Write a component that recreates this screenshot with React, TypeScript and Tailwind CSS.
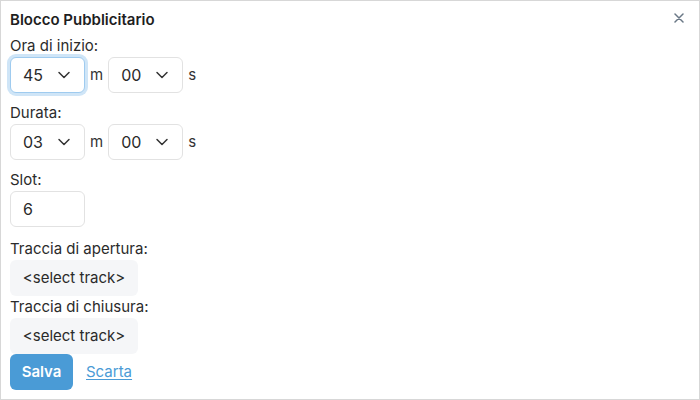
import React from "react";
import { ChevronDown } from "lucide-react";

function Sel({ value, focus }: { value: string; focus?: boolean }) {
  return (
    <div
      className={
        "flex h-[36px] w-[75px] items-center justify-between rounded-[6px] border bg-white pl-[12px] pr-[10px] text-[16px] text-[#2a2a2a] " +
        (focus
          ? "border-[#9fcbef] shadow-[0_0_0_3px_#cfe5f7]"
          : "border-[#e2e2e2]")
      }
    >
      <span>{value}</span>
      <ChevronDown size={20} strokeWidth={1.8} className="text-[#333]" />
    </div>
  );
}

function TimeRow({ m, s, focus }: { m: string; s: string; focus?: boolean }) {
  return (
    <div className="mt-px flex items-center gap-[5px]">
      <Sel value={m} focus={focus} />
      <span className="text-[15px] text-[#333]">m</span>
      <Sel value={s} />
      <span className="text-[15px] text-[#333]">s</span>
    </div>
  );
}

export default function App() {
  return (
    <div
      className="relative flex h-[400px] w-[700px] flex-col border border-[#d7d7d7] bg-white px-[9px] pt-[9px] text-[#2b2b2b]"
      style={{ fontFamily: "Inter, 'Noto Sans', sans-serif" }}
    >
      <button className="absolute right-[15px] top-[12px] flex h-[10px] w-[10px] items-center justify-center">
        <svg width="10" height="10" viewBox="0 0 10 10">
          <path d="M1 1 L9 9 M9 1 L1 9" stroke="#6a7886" strokeWidth="1.5" strokeLinecap="round" />
        </svg>
      </button>
      <div className="mb-[6px] h-[20px] text-[15px] font-semibold leading-[20px] text-[#1e1e1e]">
        Blocco Pubblicitario
      </div>

      <div className="mb-[10px]">
        <div className="h-[20px] text-[15px] leading-[20px]">Ora di inizio:</div>
        <TimeRow m="45" s="00" focus />
      </div>

      <div className="mb-[10px]">
        <div className="h-[20px] text-[15px] leading-[20px]">Durata:</div>
        <TimeRow m="03" s="00" />
      </div>

      <div className="mb-[12px]">
        <div className="h-[20px] text-[15px] leading-[20px]">Slot:</div>
        <div className="mt-px flex h-[36px] w-[75px] items-center rounded-[6px] border border-[#e2e2e2] bg-white pl-[12px] text-[16px] text-[#2a2a2a]">
          6
        </div>
      </div>

      <div className="h-[20px] text-[15px] leading-[20px]">Traccia di apertura:</div>
      <div className="mt-px flex h-[36px] w-[128px] items-center justify-center rounded-[6px] bg-[#f5f6f8] text-[15px] text-[#2a2a2a]">
        &lt;select track&gt;
      </div>
      <div className="mt-px h-[20px] text-[15px] leading-[20px]">Traccia di chiusura:</div>
      <div className="mt-px flex h-[36px] w-[128px] items-center justify-center rounded-[6px] bg-[#f5f6f8] text-[15px] text-[#2a2a2a]">
        &lt;select track&gt;
      </div>

      <div className="flex items-center gap-[13px]">
        <button className="flex h-[36px] w-[63px] items-center justify-center rounded-[6px] bg-[#4a9bd6] text-[15px] font-semibold text-white">
          Salva
        </button>
        <a className="text-[15px] text-[#4a9bd6] underline underline-offset-2">Scarta</a>
      </div>
    </div>
  );
}
